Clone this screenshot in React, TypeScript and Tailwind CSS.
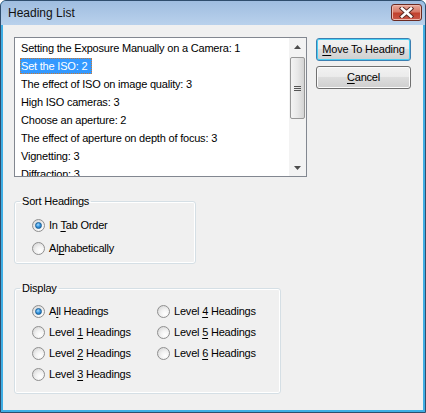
import React from 'react'

const headings = [
  'Setting the Exposure Manually on a Camera: 1',
  'Set the ISO: 2',
  'The effect of ISO on image quality: 3',
  'High ISO cameras: 3',
  'Choose an aperture: 2',
  'The effect of aperture on depth of focus: 3',
  'Vignetting: 3',
  'Diffraction: 3',
]

const Radio = ({ checked }: { checked?: boolean }) => (
  <span className="relative flex size-[13px] shrink-0 items-center justify-center rounded-full border border-[#8f8f8f] bg-[radial-gradient(circle_at_65%_70%,#ffffff_0%,#f2f2f2_40%,#cfcfcf_100%)]">
    {checked && (
      <span className="size-[7px] rounded-full border border-[#1b5f95] bg-[radial-gradient(circle_at_40%_35%,#a8dbff_0%,#3a98e0_45%,#0d5ea8_100%)]" />
    )}
  </span>
)

type OptionProps = {
  label: React.ReactNode
  checked?: boolean
  height: string
}
const Option = ({ label, checked, height }: OptionProps) => (
  <div className={`flex items-center gap-[4px] ${height}`}>
    <Radio checked={checked} />
    <span>{label}</span>
  </div>
)

const Btn = ({ children, focused }: { children: React.ReactNode; focused?: boolean }) => (
  <button
    className={`flex h-[23px] w-[95px] items-center justify-center rounded-[3px] border bg-[linear-gradient(#f2f2f2_0%,#ebebeb_45%,#dddddd_50%,#cfcfcf_100%)] text-black ${
      focused ? 'border-[#3c7fb1] shadow-[inset_0_0_0_1px_#48d0f5]' : 'border-[#707070] shadow-[inset_0_0_0_1px_#fbfbfb]'
    }`}
  >
    {children}
  </button>
)

const ScrollBar = () => (
  <div className="flex w-[17px] flex-col bg-[#f3f3f3]">
    <div className="flex h-[17px] items-center justify-center">
      <svg width="7" height="4" viewBox="0 0 7 4">
        <path d="M3.5 0 L7 4 L0 4 Z" fill="#4d4d4d" />
      </svg>
    </div>
    <div className="mx-[1px] mt-[2px] flex h-[62px] items-center justify-center rounded-[2px] border border-[#979797] bg-[linear-gradient(90deg,#f4f4f4_0%,#e8e8e8_50%,#d4d4d4_100%)]">
      <div className="flex flex-col gap-[1px]">
        <div className="h-[1px] w-[7px] bg-[#555]" />
        <div className="h-[1px] w-[7px] bg-[#555]" />
        <div className="h-[1px] w-[7px] bg-[#555]" />
      </div>
    </div>
    <div className="flex-1" />
    <div className="flex h-[17px] items-center justify-center">
      <svg width="7" height="4" viewBox="0 0 7 4">
        <path d="M0 0 L7 0 L3.5 4 Z" fill="#4d4d4d" />
      </svg>
    </div>
  </div>
)

const App = () => {
  return (
    <div
      className="flex h-[413px] w-[426px] flex-col overflow-hidden rounded-t-[6px] border border-[#2f4d6d] bg-[#40aee4] text-[11px] tracking-[-0.2px] text-black"
      style={{ fontFamily: '"Liberation Sans", Arial, sans-serif' }}
    >
      <div className="flex h-[24px] shrink-0 items-center justify-between bg-[linear-gradient(#9fbde0,#b9d1ec)] pl-[7px] pr-[3px]">
        <span className="text-[12px] tracking-normal text-[#111]">Heading List</span>
        <div className="mt-[-1px] flex h-[17px] w-[31px] items-center justify-center rounded-[3px] border border-[#6b2a22] bg-[linear-gradient(#e9a99b_0%,#d77a68_45%,#c2412d_55%,#c9584a_100%)] shadow-[inset_0_0_0_1px_#eeb9ad]">
          <svg width="15" height="11" viewBox="0 0 15 11">
            <path d="M3 1.5 L12 9.5 M12 1.5 L3 9.5" stroke="#5a2a24" strokeWidth="4.5" strokeLinecap="square" />
            <path d="M3 1.5 L12 9.5 M12 1.5 L3 9.5" stroke="#ffffff" strokeWidth="2.6" strokeLinecap="square" />
          </svg>
        </div>
      </div>

      <div className="mx-[2px] mb-[2px] flex-1 bg-[#f0f0f0] pl-[11px] pt-[12px]">
        <div className="flex items-start gap-[9px]">
          <div className="flex h-[140px] w-[293px] overflow-hidden border border-[#828790] bg-white">
            <div className="flex-1 pl-[5px] pt-[1px]">
              {headings.map((h, i) => (
                <div key={h} className="flex h-[18px] items-center whitespace-nowrap">
                  {i === 1 ? (
                    <span className="flex h-[16px] items-center border border-dotted border-[#c97a35] bg-[#3399ff] pr-[4px] text-white">
                      {h}
                    </span>
                  ) : (
                    <span className="pl-[1px]">{h}</span>
                  )}
                </div>
              ))}
            </div>
            <ScrollBar />
          </div>

          <div className="mt-[1px] flex flex-col gap-[5px]">
            <Btn focused>
              <span>
                <u className="underline-offset-2">M</u>ove To Heading
              </span>
            </Btn>
            <Btn>
              <span>
                <u className="underline-offset-2">C</u>ancel
              </span>
            </Btn>
          </div>
        </div>

        <fieldset className="mt-[18px] w-[182px] rounded-[3px] border border-[#d5dfe5] pb-[3px] pl-[17px] pt-[6px] shadow-[inset_0_0_0_1px_#ffffff]">
          <legend className="-ml-[12px] px-[2px] leading-[13px]">Sort Headings</legend>
          <Option
            height="h-[23px]"
            checked
            label={
              <>
                In <u className="underline-offset-2">T</u>ab Order
              </>
            }
          />
          <Option
            height="h-[23px]"
            label={
              <>
                Al<u className="underline-offset-2">p</u>habetically
              </>
            }
          />
        </fieldset>

        <fieldset className="mt-[18px] w-[267px] rounded-[3px] border border-[#d5dfe5] pb-[8px] pl-[17px] pt-[6px] shadow-[inset_0_0_0_1px_#ffffff]">
          <legend className="-ml-[12px] px-[2px] leading-[13px]">Display</legend>
          <div className="grid grid-flow-col grid-cols-[125px_auto] grid-rows-4">
            <Option
              height="h-[21px]"
              checked
              label={
                <>
                  A<u className="underline-offset-2">l</u>l Headings
                </>
              }
            />
            {[1, 2, 3, 4, 5, 6].map((n) => (
              <Option
                key={n}
                height="h-[21px]"
                label={
                  <>
                    Level <u className="underline-offset-2">{n}</u> Headings
                  </>
                }
              />
            ))}
          </div>
        </fieldset>
      </div>
    </div>
  )
}

export default App
